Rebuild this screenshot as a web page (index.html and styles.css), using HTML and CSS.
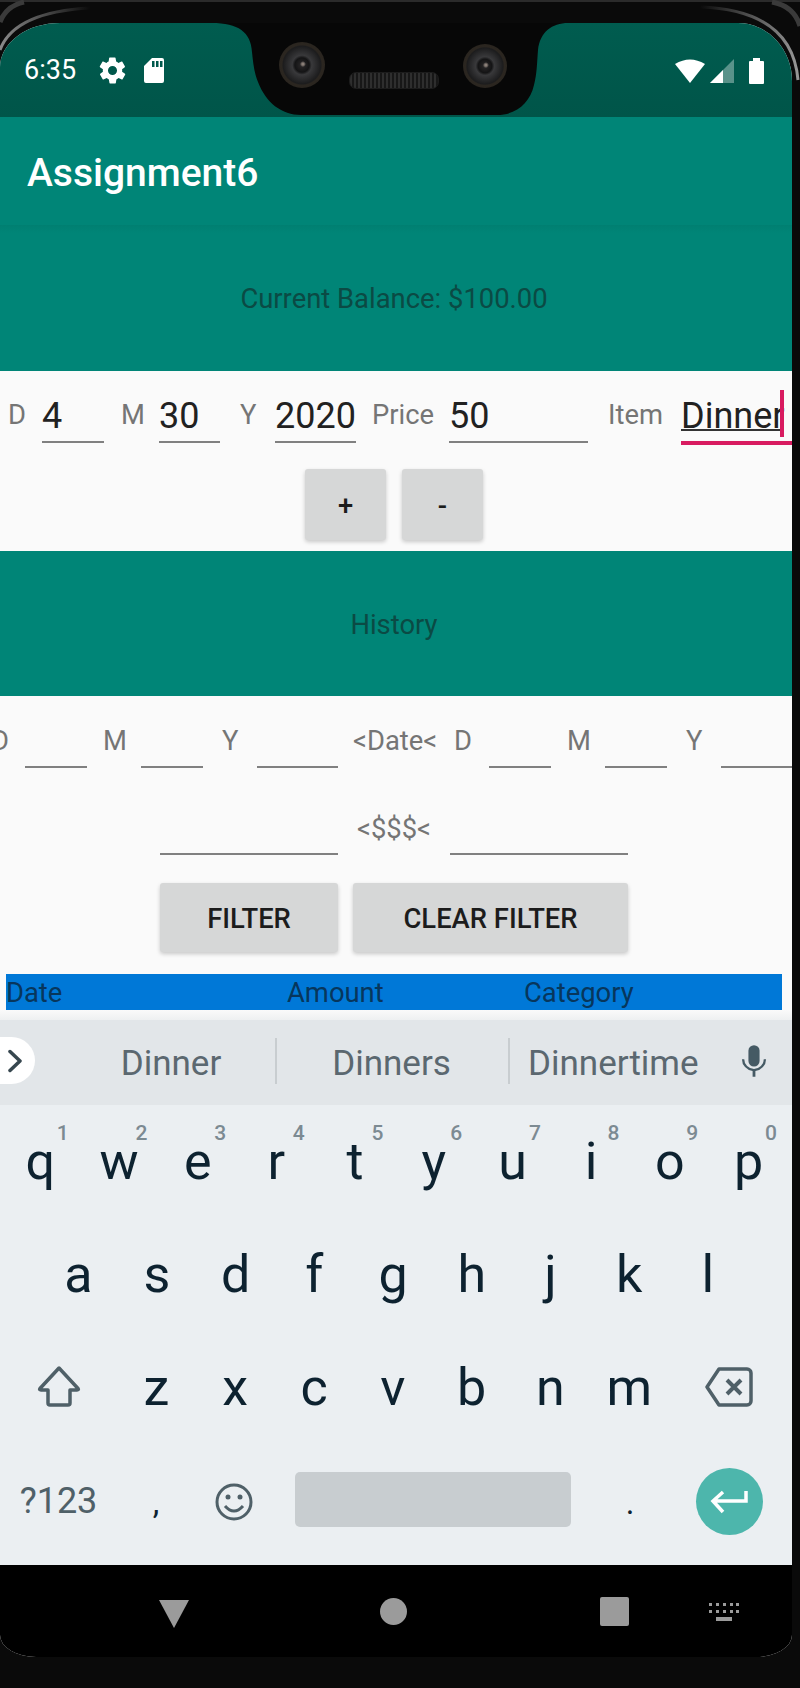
FILE: index.html
```html
<!DOCTYPE html>
<html lang="en">
  <head>
    <meta charset="UTF-8" />
    <title>Assignment6</title>
    <link rel="stylesheet" href="styles.css">
  </head>

  <body>
    <div id="device">
      <svg id="bezel" width="800" height="90" viewBox="0 0 800 90" fill="none">
        <defs>
          <linearGradient id="shine-left" x1="0" y1="0" x2="90" y2="0" gradientUnits="userSpaceOnUse">
            <stop offset="0" stop-color="#8a8a8a" />
            <stop offset="1" stop-color="#8a8a8a" stop-opacity="0" />
          </linearGradient>
          <linearGradient id="shine-right" x1="800" y1="0" x2="700" y2="0" gradientUnits="userSpaceOnUse">
            <stop offset="0" stop-color="#9a9a9a" />
            <stop offset="1" stop-color="#9a9a9a" stop-opacity="0" />
          </linearGradient>
        </defs>
        <path d="M0 1H800" stroke="#2b2b2b" stroke-width="2" />
        <path d="M0 50Q14 12 90 8" stroke="url(#shine-left)" stroke-width="3" />
        <path d="M0 22Q6 6 24 2" stroke="#3a3a3a" stroke-width="5" />
        <path d="M798 80Q792 10 700 7" stroke="url(#shine-right)" stroke-width="3" />
        <path d="M800 26Q794 6 772 2" stroke="#3a3a3a" stroke-width="5" />
      </svg>

      <div id="screen">
        <div id="status-bar">
          <div class="status-left">
            <span class="clock">6:35</span>
            <svg width="31" height="31" viewBox="0 0 24 24" fill="#fff"><path d="M19.4 13c.1-.3.1-.7.1-1s0-.7-.1-1l2.100-1.600c.2-.2.2-.4.1-.6l-2-3.500c-.1-.2-.4-.3-.6-.2l-2.500 1c-.5-.4-1.100-.7-1.700-1l-.4-2.600c0-.3-.2-.5-.5-.5h-4c-.3 0-.5.2-.5.4l-.4 2.700c-.6.2-1.200.6-1.700 1l-2.500-1c-.2-.1-.5 0-.6.2l-2 3.500c-.1.2-.1.4.1.6L4.600 11c-.1.3-.1.7-.1 1s0 .7.100 1l-2.100 1.600c-.2.2-.2.4-.1.600l2 3.500c.1.2.4.300.6.200l2.500-1c.5.4 1.100.7 1.700 1l.4 2.600c0 .3.2.5.5.5h4c.3 0 .5-.2.5-.4l.4-2.700c.6-.2 1.200-.6 1.700-1l2.500 1c.2.1.5 0 .6-.2l2-3.500c.1-.2.100-.4-.1-.6L19.400 13zM12 15.500a3.500 3.500 0 1 1 0-7 3.500 3.500 0 0 1 0 7z"/></svg>
            <svg width="22" height="26" viewBox="0 0 22 26" fill="#fff"><path d="M9 1h10a2 2 0 0 1 2 2v21a2 2 0 0 1-2 2H3a2 2 0 0 1-2-2V9zM9 4v6h2.500V4zM13 4v6h2.500V4zM17 4v6h2.500V4z" fill-rule="evenodd"/></svg>
          </div>
          <div class="status-right">
            <svg width="30" height="24" viewBox="0 0 30 24" fill="#fff"><path d="M0 5Q15-4 30 5L15 24z"/></svg>
            <svg width="24" height="24" viewBox="0 0 24 24"><path d="M0 24L24 0V24z" fill="#fff" fill-opacity=".35"/><path d="M0 24L13 11V24z" fill="#fff"/></svg>
            <svg width="15" height="26" viewBox="0 0 15 26" fill="#fff"><path d="M4 0h7v3h3a1 1 0 0 1 1 1v21a1 1 0 0 1-1 1H1a1 1 0 0 1-1-1V4a1 1 0 0 1 1-1h3z"/></svg>
          </div>
        </div>

        <div id="app-bar">Assignment6</div>

        <div class="band">Current Balance: $100.00</div>

        <div id="entry-form">
          <div class="field-row">
            <span class="label label-d">D</span>
            <span class="input input-day">4</span>
            <span class="label label-m">M</span>
            <span class="input input-month">30</span>
            <span class="label label-y">Y</span>
            <span class="input input-year">2020</span>
            <span class="label label-price">Price</span>
            <span class="input input-price">50</span>
            <span class="label label-item">Item</span>
            <span class="input input-item"><span class="composing">Dinner</span><span class="caret"></span></span>
          </div>
          <div class="button-row">
            <button class="raised small">+</button>
            <button class="raised small">-</button>
          </div>
        </div>

        <div class="band">History</div>

        <div id="filter-form">
          <div class="filter-dates">
            <span class="label f-d1">D</span><span class="line w62"></span>
            <span class="label f-m">M</span><span class="line w62"></span>
            <span class="label f-y">Y</span><span class="line w81"></span>
            <span class="label f-date">&lt;Date&lt;</span>
            <span class="label f-d2">D</span><span class="line w62"></span>
            <span class="label f-m">M</span><span class="line w62"></span>
            <span class="label f-y">Y</span><span class="line w71"></span>
          </div>
          <div class="filter-price">
            <span class="line w178"></span>
            <span class="label">&lt;$$$&lt;</span>
            <span class="line w178"></span>
          </div>
          <div class="filter-buttons">
            <button class="raised filter-btn">FILTER</button>
            <button class="raised clear-btn">CLEAR FILTER</button>
          </div>
        </div>

        <div id="table-head">
          <span class="col-date">Date</span>
          <span class="col-amount">Amount</span>
          <span class="col-category">Category</span>
        </div>
        <div id="table-gap"></div>

        <div id="suggestions">
          <span class="chevron">
            <svg width="15" height="24" viewBox="0 0 15 24" fill="none" stroke="#37474f" stroke-width="3.500" stroke-linecap="round" stroke-linejoin="round"><path d="M2 2.500l10 9.500-10 9.500"/></svg>
          </span>
          <span class="word word-1">Dinner</span>
          <span class="divider"></span>
          <span class="word word-2">Dinners</span>
          <span class="divider"></span>
          <span class="word word-3">Dinnertime</span>
          <svg class="mic" width="26" height="34" viewBox="0 0 28 34" fill="#455a64"><path d="M14 0a6 6 0 0 1 6 6v11a6 6 0 0 1-12 0V6a6 6 0 0 1 6-6z"/><path d="M1 15h2.500a10.500 10.500 0 0 0 21 0H27a13 13 0 0 1-11.500 12.800V34h-3v-6.200A13 13 0 0 1 1 15z"/></svg>
        </div>

        <div id="keyboard">
          <div class="key-row row-top">
            <span class="key">q<sup>1</sup></span>
            <span class="key">w<sup>2</sup></span>
            <span class="key">e<sup>3</sup></span>
            <span class="key">r<sup>4</sup></span>
            <span class="key">t<sup>5</sup></span>
            <span class="key">y<sup>6</sup></span>
            <span class="key">u<sup>7</sup></span>
            <span class="key">i<sup>8</sup></span>
            <span class="key">o<sup>9</sup></span>
            <span class="key">p<sup>0</sup></span>
          </div>
          <div class="key-row row-home">
            <span class="key">a</span>
            <span class="key">s</span>
            <span class="key">d</span>
            <span class="key">f</span>
            <span class="key">g</span>
            <span class="key">h</span>
            <span class="key">j</span>
            <span class="key">k</span>
            <span class="key">l</span>
          </div>
          <div class="key-row row-bottom">
            <span class="key icon-key">
              <svg width="44" height="42" viewBox="0 0 44 42" fill="none" stroke="#4f6068" stroke-width="3.500" stroke-linejoin="round"><path d="M22 2L3 22.500q-1 1.500 1 1.500h7v13a2 2 0 0 0 2 2h18a2 2 0 0 0 2-2v-13h7q2 0 1-1.500z"/></svg>
            </span>
            <span class="key">z</span>
            <span class="key">x</span>
            <span class="key">c</span>
            <span class="key">v</span>
            <span class="key">b</span>
            <span class="key">n</span>
            <span class="key">m</span>
            <span class="key icon-key backspace">
              <svg width="48" height="40" viewBox="0 0 48 40" fill="none" stroke="#4f6068" stroke-width="3.500" stroke-linejoin="round"><path d="M14 2H42a4 4 0 0 1 4 4V34a4 4 0 0 1-4 4H14L2 20z"/><path d="M22 13l14 14M36 13L22 27" stroke-width="4"/></svg>
            </span>
          </div>
          <div class="key-row row-space">
            <span class="key symbols">?123</span>
            <span class="key punct">,</span>
            <span class="key icon-key">
              <svg width="38" height="38" viewBox="0 0 38 38" fill="none" stroke="#4f6068" stroke-width="3"><circle cx="19" cy="19" r="17"/><path d="M10 23q9 10 18 0"/><circle cx="13" cy="14" r="2.500" fill="#4f6068" stroke="none"/><circle cx="25" cy="14" r="2.500" fill="#4f6068" stroke="none"/></svg>
            </span>
            <span class="spacebar"></span>
            <span class="key punct">.</span>
            <span class="key icon-key">
              <span class="enter">
                <svg width="38" height="24" viewBox="0 0 38 24" fill="none" stroke="#fff" stroke-width="3.500"><path d="M36 1v10H4M13 2L3 11l10 11"/></svg>
              </span>
            </span>
          </div>
        </div>

        <div id="nav-bar">
          <svg class="nav-back" width="32" height="28" viewBox="0 0 32 28" fill="#9b9b9b"><path d="M1 0h30L16 28z"/></svg>
          <span class="nav-home"></span>
          <span class="nav-recent"></span>
          <svg class="nav-keys" width="30" height="18" viewBox="0 0 30 18" fill="#9b9b9b"><path d="M0 0h3v3H0zM7 0h3v3H7zM14 0h3v3h-3zM21 0h3v3h-3zM27 0h3v3h-3zM0 7h3v3H0zM7 7h3v3H7zM14 7h3v3h-3zM21 7h3v3h-3zM27 7h3v3h-3zM7 14h16v4H7z"/></svg>
        </div>
      </div>

      <div id="notch">
        <svg width="800" height="120" viewBox="0 0 800 120" fill="#070707"><path d="M212 23C238 23 251 32 252 52C253 62 254 72 258 82C266 103 282 115 301 115H497C516 115 530 103 534 85C537 74 537 62 538 50C540 32 552 23 568 23z"/></svg>
        <span class="camera cam-left"></span>
        <span class="speaker"></span>
        <span class="camera cam-right"></span>
      </div>
    </div>
  </body>
</html>
```

FILE: styles.css
```css
html {
  box-sizing: border-box;
  font-family: Roboto, sans-serif;
}
*,
*:before,
*:after {
  box-sizing: inherit;
}

body {
  margin: 0;
  background-color: #0a0a0a;
}

#device {
  position: relative;
  width: 800px;
  height: 1688px;
  padding-top: 23px;
  overflow: hidden;
  background-color: #0a0a0a;
}

#bezel {
  position: absolute;
  top: 0;
  left: 0;
}

#screen {
  position: relative;
  width: 792px;
  height: 1634px;
  display: flex;
  flex-direction: column;
  background-color: #fafafa;
  border-radius: 60px 54px 36px 36px / 44px 58px 22px 22px;
  overflow: hidden;
}

/* status bar */
#status-bar {
  height: 94px;
  flex-shrink: 0;
  padding: 24px 28px 0 24px;
  display: flex;
  justify-content: space-between;
  background: linear-gradient(#005c4f, #005549);
  color: white;
}

.status-left,
.status-right {
  height: 46px;
  display: flex;
  align-items: center;
}

.status-left {
  gap: 15px;
}

.status-right {
  gap: 5px;
  padding-top: 1px;
}

.status-right svg:nth-child(3) {
  margin-left: 10px;
}

.clock {
  font-size: 27px;
  margin-right: 6px;
}

#notch {
  position: absolute;
  top: 0;
  left: 0;
  width: 800px;
  height: 120px;
}

.camera {
  position: absolute;
  top: 42px;
  left: 279px;
  width: 46px;
  height: 46px;
  border-radius: 50%;
  background:
    radial-gradient(circle at 52% 48%, #8a7f78 0, #8a7f78 1px, transparent 3px),
    radial-gradient(circle, #2c2a2b 0, #141415 22%, #39393b 30%, #1c1c1d 58%, #2b2620 62%, #27231d 100%);
}

.cam-right {
  left: 463px;
  top: 44px;
  width: 44px;
  height: 44px;
}

.speaker {
  position: absolute;
  left: 349px;
  top: 72px;
  width: 90px;
  height: 17px;
  border-radius: 7px;
  border: 1px solid #1c1c1c;
  background: repeating-linear-gradient(90deg, #2e2e2e 0 2px, #171717 2px 4px);
}

/* app bar */
#app-bar {
  height: 108px;
  flex-shrink: 0;
  padding: 4px 27px 0;
  display: flex;
  align-items: center;
  background-color: #008577;
  color: white;
  font-size: 39px;
  font-weight: 500;
}

.band {
  height: 145px;
  flex-shrink: 0;
  display: flex;
  align-items: center;
  justify-content: center;
  padding: 2px 4px 0 0;
  background-color: #008577;
  color: #0b4a44;
  font-size: 27.400px;
}

#app-bar + .band {
  height: 146px;
  background: linear-gradient(#007f71 0, #008577 8px);
}

/* entry form */
#entry-form {
  height: 180px;
  flex-shrink: 0;
  display: flex;
  flex-direction: column;
}

.field-row {
  display: flex;
  height: 98px;
  align-items: flex-start;
}

.label {
  color: #757575;
  font-size: 27.400px;
  flex-shrink: 0;
}

.field-row .label {
  margin-top: 28px;
}

.input {
  height: 72px;
  padding-top: 23px;
  border-bottom: 2px solid #808080;
  color: #212121;
  font-size: 36px;
  line-height: 44px;
  flex-shrink: 0;
}

.label-d { margin-left: 8px; width: 34px; }
.input-day { width: 62px; }
.label-m { margin-left: 17px; width: 38px; }
.input-month { width: 61px; }
.label-y { margin-left: 20px; width: 35px; }
.input-year { width: 81px; }
.label-price { margin-left: 16px; width: 77px; }
.input-price { width: 139px; }
.label-item { margin-left: 20px; width: 73px; }

.input-item {
  width: 111px;
  height: 74px;
  border-bottom: 4px solid #d81b60;
  position: relative;
}

.composing {
  display: inline-block;
  height: 37px;
  border-bottom: 2px solid #333;
}

.caret {
  position: absolute;
  left: 99px;
  top: 19px;
  width: 4px;
  height: 47px;
  background-color: #d81b60;
}

.button-row {
  display: flex;
  justify-content: center;
  gap: 16px;
  padding-right: 4px;
}

.raised {
  height: 71px;
  padding-top: 4px;
  border: none;
  border-radius: 3px;
  background-color: #d6d7d7;
  color: #1c1c1c;
  font-family: Roboto, sans-serif;
  font-size: 27.400px;
  font-weight: 500;
  box-shadow: 0 2px 4px rgba(0, 0, 0, 0.2);
}

.small {
  width: 81px;
}

/* filter form */
#filter-form {
  height: 278px;
  flex-shrink: 0;
}

.filter-dates {
  height: 72px;
  display: flex;
  margin-left: -9px;
  align-items: flex-end;
}

.filter-dates .label {
  height: 44px;
  margin-bottom: -1px;
}

.line {
  display: block;
  height: 2px;
  flex-shrink: 0;
  background-color: #808080;
}

.w62 { width: 62px; }
.w71 { width: 71px; }
.w81 { width: 81px; }
.w178 { width: 178px; }

.f-d1 { width: 34px; }
.f-m { margin-left: 16px; width: 38px; }
.f-y { margin-left: 19px; width: 35px; }
.f-date { margin-left: 15px; width: 101px; }
.f-d2 { width: 35px; }

.filter-price {
  height: 87px;
  padding-left: 160px;
  display: flex;
  align-items: flex-end;
}

.filter-price .label {
  width: 112px;
  text-align: center;
  height: 42px;
}

.filter-buttons {
  margin-top: 28px;
  padding-left: 160px;
  display: flex;
  gap: 15px;
}

.filter-btn { width: 178px; height: 69px; }
.clear-btn { width: 275px; height: 69px; }

/* table */
#table-head {
  height: 36px;
  margin: 0 10px 0 6px;
  padding-top: 2px;
  flex-shrink: 0;
  display: flex;
  align-items: center;
  background-color: #0078d7;
  color: #07365c;
  font-size: 27.400px;
}

.col-date { width: 281px; }
.col-amount { width: 237px; }

#table-gap {
  height: 10px;
  flex-shrink: 0;
  background: linear-gradient(#fafafa, #eef0f1);
}

/* keyboard */
#suggestions {
  height: 85px;
  flex-shrink: 0;
  display: flex;
  align-items: center;
  background-color: #e2e6e9;
  color: #5b6870;
  font-size: 35px;
}

.chevron {
  width: 35px;
  height: 47px;
  margin-top: -4px;
  padding-left: 8px;
  display: flex;
  align-items: center;
  background-color: white;
  border-radius: 0 24px 24px 0;
}

.word {
  text-align: center;
  margin-top: 1px;
}

.word-1 { width: 208px; margin-left: 32px; }
.word-2 { width: 231px; padding-right: 2px; }
.word-3 { width: 186px; margin-left: 18px; text-align: left; }

.divider {
  width: 2px;
  height: 46px;
  margin-top: -4px;
  background-color: #c8cdd0;
}

.mic {
  margin-left: 27px;
  margin-top: -3px;
}

#keyboard {
  height: 460px;
  flex-shrink: 0;
  background-color: #ebeff2;
  color: #0d2230;
  font-size: 52px;
}

.key-row {
  height: 115px;
  display: grid;
  grid-template-columns: repeat(10, 78.700px);
}

.row-top {
  padding-left: 1px;
}

.row-top .key {
  padding-bottom: 2px;
}

.row-home {
  padding-left: 39px;
}

.row-home .key {
  padding-bottom: 6px;
}

.row-bottom {
  grid-template-columns: 117px repeat(7, 78.800px) 116px;
}

.key {
  position: relative;
  display: flex;
  align-items: center;
  justify-content: center;
  padding-bottom: 10px;
}

.icon-key {
  padding-bottom: 12px;
}

.row-space {
  grid-template-columns: 117px 78px 78px 298px 118px 80px;
}

.key sup {
  position: absolute;
  top: 16px;
  right: 11px;
  color: #7c8a92;
  font-size: 21px;
  font-weight: 500;
  line-height: 24px;
}

.backspace {
  padding-left: 4px;
}

.key.symbols {
  color: #4f6068;
  font-size: 36px;
  padding-bottom: 14px;
}

.punct {
  font-size: 33px;
}

.spacebar {
  height: 55px;
  margin-top: 22px;
  margin-left: 22px;
  background-color: #c8cdd0;
  border-radius: 5px;
}

.enter {
  width: 67px;
  height: 67px;
  display: flex;
  align-items: center;
  justify-content: center;
  border-radius: 50%;
  background-color: #4db6ac;
}

/* navigation */
#nav-bar {
  height: 92px;
  flex-shrink: 0;
  display: flex;
  align-items: flex-start;
  padding-top: 32px;
  background-color: black;
}

.nav-back {
  margin-left: 158px;
  margin-top: 3px;
}

.nav-home {
  width: 27px;
  height: 27px;
  margin-left: 190px;
  margin-top: 1px;
  border-radius: 50%;
  background-color: #9b9b9b;
}

.nav-recent {
  width: 29px;
  height: 29px;
  margin-left: 193px;
  border-radius: 2px;
  background-color: #9b9b9b;
}

.nav-keys {
  margin-left: 80px;
  margin-top: 6px;
}
```
